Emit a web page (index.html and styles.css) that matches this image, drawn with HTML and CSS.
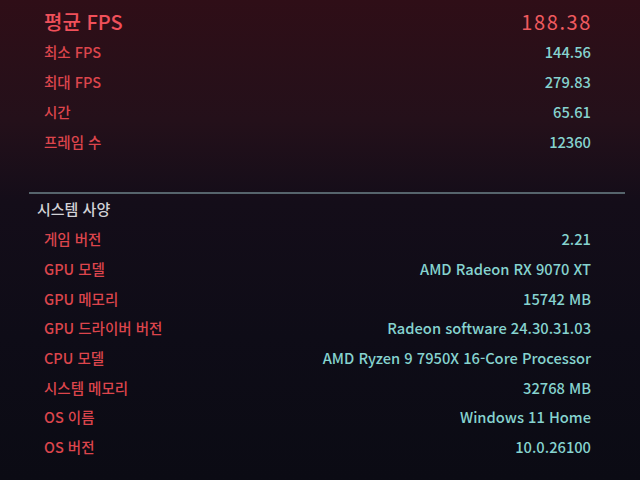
FILE: index.html
```html
<!DOCTYPE html>
<html lang="ko">
<head>
    <meta charset="UTF-8">
    <title>벤치마크 결과</title>
    <link rel="stylesheet" href="styles.css">
</head>
<body>

<div class="page">
    <div class="stats">
        <div class="row main">
            <span class="label">평균 FPS</span>
            <span class="value">188.38</span>
        </div>
        <div class="row">
            <span class="label">최소 FPS</span>
            <span class="value">144.56</span>
        </div>
        <div class="row">
            <span class="label">최대 FPS</span>
            <span class="value">279.83</span>
        </div>
        <div class="row">
            <span class="label">시간</span>
            <span class="value">65.61</span>
        </div>
        <div class="row">
            <span class="label">프레임 수</span>
            <span class="value">12360</span>
        </div>
    </div>

    <div class="divider"></div>

    <h2 class="section-title">시스템 사양</h2>
    <div class="stats system">
        <div class="row">
            <span class="label">게임 버전</span>
            <span class="value">2.21</span>
        </div>
        <div class="row">
            <span class="label">GPU 모델</span>
            <span class="value">AMD Radeon RX 9070 XT</span>
        </div>
        <div class="row">
            <span class="label">GPU 메모리</span>
            <span class="value">15742 MB</span>
        </div>
        <div class="row">
            <span class="label">GPU 드라이버 버전</span>
            <span class="value">Radeon software 24.30.31.03</span>
        </div>
        <div class="row">
            <span class="label">CPU 모델</span>
            <span class="value">AMD Ryzen 9 7950X 16-Core Processor</span>
        </div>
        <div class="row">
            <span class="label">시스템 메모리</span>
            <span class="value">32768 MB</span>
        </div>
        <div class="row">
            <span class="label">OS 이름</span>
            <span class="value">Windows 11 Home</span>
        </div>
        <div class="row">
            <span class="label">OS 버전</span>
            <span class="value">10.0.26100</span>
        </div>
    </div>
</div>

</body>
</html>
```

FILE: styles.css
```css
html, body {
    height: 100%;
}

body {
    margin: 0;
    background: linear-gradient(to bottom, #2f0e17 0%, #24101a 25%, #140d19 42%, #0e0c17 70%, #0b0b14 100%);
    font-family: "Noto Sans CJK KR", "Noto Sans", sans-serif;
    font-weight: 500;
    overflow: hidden;
}

.page {
    padding: 6px 15px 0 29px;
}

.stats {
    padding: 0 34px 0 15px;
}

.row {
    display: flex;
    justify-content: space-between;
    align-items: center;
    height: 30px;
    font-size: 14px;
}

.label {
    color: #dc454c;
    font-size: 14.5px;
}

.value {
    color: #86d3cf;
    font-size: 14.7px;
}

.row.main .label {
    font-size: 20px;
    color: #f0505a;
}

.row.main .value {
    font-size: 20px;
    font-weight: normal;
    color: #ef5a5f;
    letter-spacing: 1.6px;
    margin-right: -1px;
}

.divider {
    margin-top: 36px;
    height: 2px;
    background-color: #56646c;
}

.section-title {
    margin: 0;
    padding-left: 8px;
    height: 30px;
    line-height: 30px;
    font-size: 15px;
    font-weight: 500;
    color: #d2d2d6;
}

.system .row {
    height: 29.7px;
}
```
